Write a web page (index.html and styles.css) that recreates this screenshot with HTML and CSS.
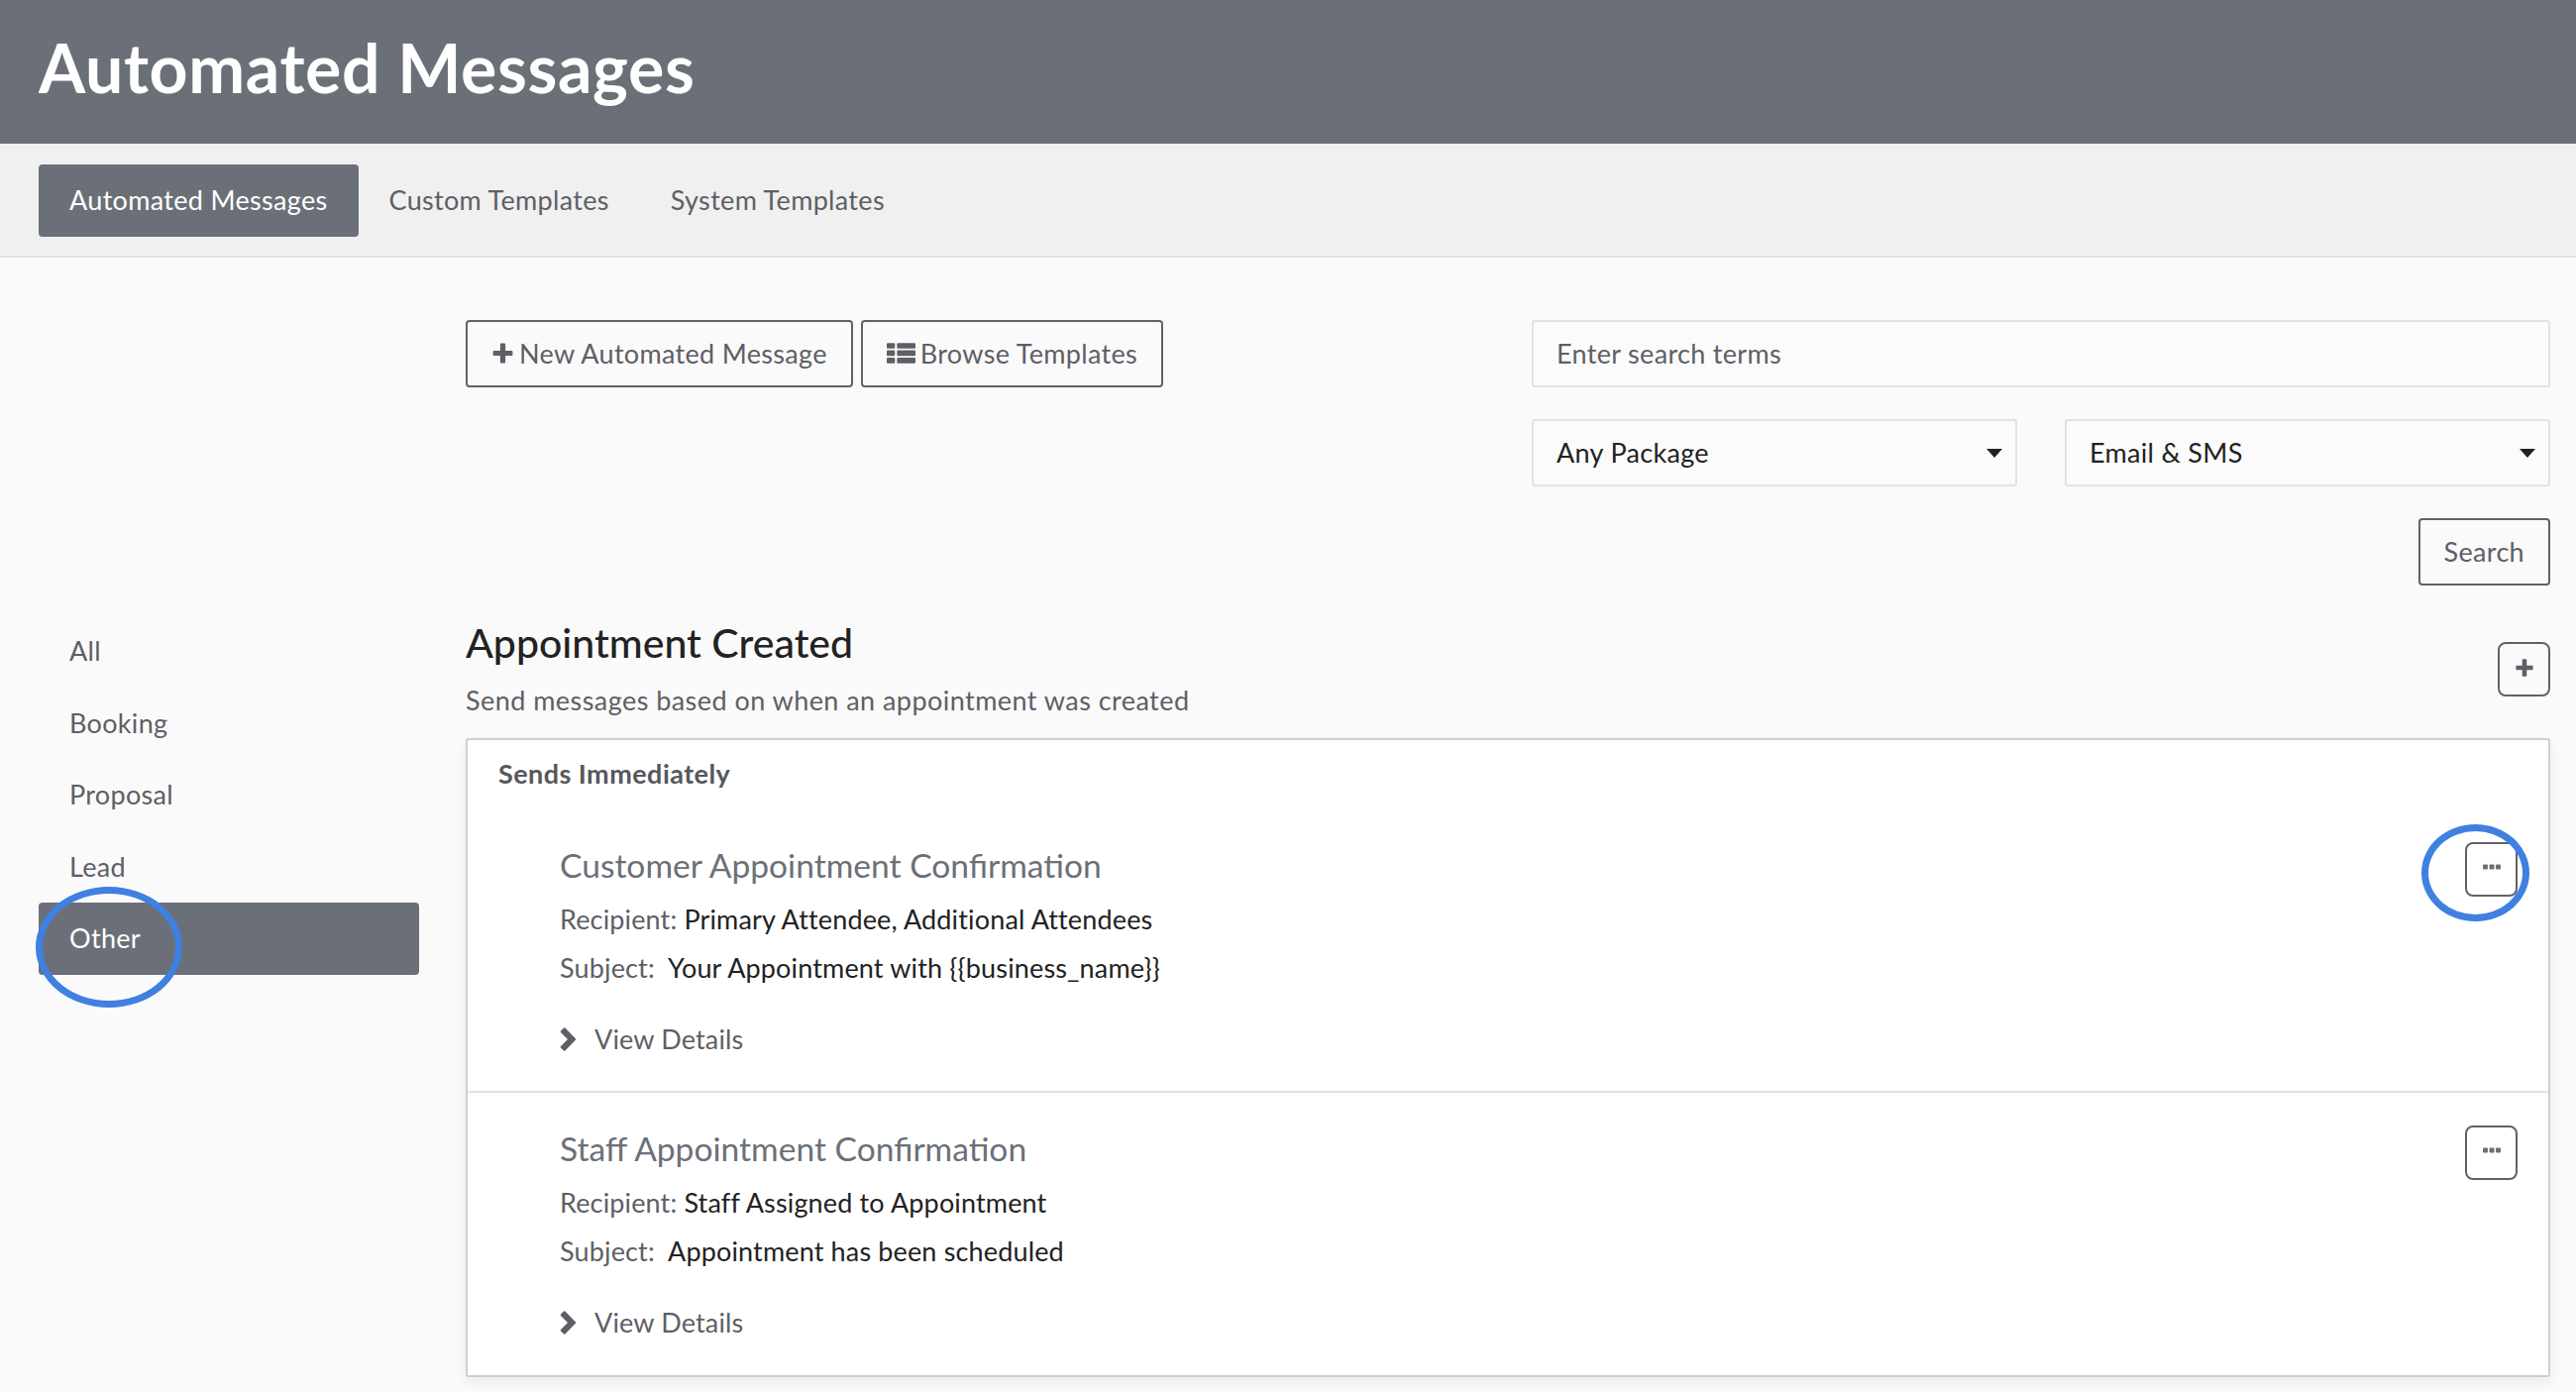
FILE: index.html
```html
<!DOCTYPE html>
<html lang="en">
<head>
<meta charset="utf-8">
<title>Automated Messages</title>
<link rel="stylesheet" href="styles.css">
</head>
<body>
<header class="hero"><h1 class="hero-title">Automated Messages</h1></header>
<nav class="subnav">
  <a class="tab tab-active">Automated Messages</a>
  <a class="tab">Custom Templates</a>
  <a class="tab">System Templates</a>
</nav>
<div class="page">
  <aside class="sidebar">
    <a class="side-item">All</a>
    <a class="side-item">Booking</a>
    <a class="side-item">Proposal</a>
    <a class="side-item">Lead</a>
    <a class="side-item side-active">Other<span class="ring ring-other"></span></a>
  </aside>
  <main class="main">
    <section class="toolbar">
      <div class="toolbar-left">
        <button class="btn">
          <svg class="btn-icon" viewBox="0 0 22 22"><path d="M8.5 2.5a1 1 0 0 1 1-1h3a1 1 0 0 1 1 1v6h6a1 1 0 0 1 1 1v3a1 1 0 0 1-1 1h-6v6a1 1 0 0 1-1 1h-3a1 1 0 0 1-1-1v-6h-6a1 1 0 0 1-1-1v-3a1 1 0 0 1 1-1h6z"/></svg>New Automated Message
        </button>
        <button class="btn">
          <svg class="btn-icon btn-icon-list" viewBox="0 0 28 22"><rect y="1" width="8" height="5.5" rx="1"/><rect x="10" y="1" width="18" height="5.5" rx="1"/><rect y="8.2" width="8" height="5.5" rx="1"/><rect x="10" y="8.2" width="18" height="5.5" rx="1"/><rect y="15.4" width="8" height="5.5" rx="1"/><rect x="10" y="15.4" width="18" height="5.5" rx="1"/></svg>Browse Templates
        </button>
      </div>
      <form class="filters">
        <input class="field" type="text" placeholder="Enter search terms">
        <div class="filter-row">
          <div class="select-wrap"><select class="field field-select"><option>Any Package</option></select></div>
          <div class="select-wrap"><select class="field field-select"><option>Email &amp; SMS</option></select></div>
        </div>
        <button class="btn btn-search" type="button">Search</button>
      </form>
    </section>
    <section class="section-head">
      <div class="section-text">
        <h2 class="section-title">Appointment Created</h2>
        <p class="section-sub">Send messages based on when an appointment was created</p>
      </div>
      <button class="square-btn square-plus" type="button">
        <svg class="plus-icon" viewBox="0 0 22 22"><path d="M8.5 2.5a1 1 0 0 1 1-1h3a1 1 0 0 1 1 1v6h6a1 1 0 0 1 1 1v3a1 1 0 0 1-1 1h-6v6a1 1 0 0 1-1 1h-3a1 1 0 0 1-1-1v-6h-6a1 1 0 0 1-1-1v-3a1 1 0 0 1 1-1h6z"/></svg>
      </button>
    </section>
    <section class="card">
      <div class="card-label">Sends Immediately</div>
      <article class="item">
        <div class="item-body">
          <h3 class="item-title">Customer Appointment Confirmation</h3>
          <p class="meta">Recipient: <span class="meta-value">Primary Attendee, Additional Attendees</span></p>
          <p class="meta meta-subject">Subject: &nbsp;<span class="meta-value">Your Appointment with {{business_name}}</span></p>
          <a class="details"><svg class="chevron" viewBox="0 0 17 24"><path d="M1 3.5 4 .6a1 1 0 0 1 1.4 0l10.5 10.7a1 1 0 0 1 0 1.4L5.4 23.4a1 1 0 0 1-1.4 0L1 20.5a1 1 0 0 1 0-1.4L8 12 1 4.900a1 1 0 0 1 0-1.400z"/></svg>View Details</a>
        </div>
        <button class="square-btn square-more" type="button">
          <svg class="more-icon" viewBox="0 0 18 6"><rect y=".5" width="5" height="5" rx="1"/><rect x="6.500" y=".5" width="5" height="5" rx="1"/><rect x="13" y=".5" width="5" height="5" rx="1"/></svg>
          <span class="ring ring-more"></span>
        </button>
      </article>
      <article class="item">
        <div class="item-body">
          <h3 class="item-title">Staff Appointment Confirmation</h3>
          <p class="meta">Recipient: <span class="meta-value">Staff Assigned to Appointment</span></p>
          <p class="meta meta-subject">Subject: &nbsp;<span class="meta-value">Appointment has been scheduled</span></p>
          <a class="details"><svg class="chevron" viewBox="0 0 17 24"><path d="M1 3.5 4 .6a1 1 0 0 1 1.4 0l10.500 10.700a1 1 0 0 1 0 1.400L5.400 23.400a1 1 0 0 1-1.400 0L1 20.500a1 1 0 0 1 0-1.400L8 12 1 4.900a1 1 0 0 1 0-1.400z"/></svg>View Details</a>
        </div>
        <button class="square-btn square-more" type="button">
          <svg class="more-icon" viewBox="0 0 18 6"><rect y=".5" width="5" height="5" rx="1"/><rect x="6.500" y=".5" width="5" height="5" rx="1"/><rect x="13" y=".5" width="5" height="5" rx="1"/></svg>
        </button>
      </article>
    </section>
  </main>
</div>
</body>
</html>
```
FILE: styles.css
```css
* { box-sizing: border-box; }
html, body { margin: 0; padding: 0; }
body {
  height: 1405px;
  overflow: hidden;
  background: #fafafa;
  color: #5d6066;
  font-family: "Lato", "Liberation Sans", sans-serif;
  font-size: 27px;
  letter-spacing: .32px;
}
button, input, select { font: inherit; letter-spacing: inherit; }

.hero {
  height: 145px;
  background: #6b7078;
  padding: 0 0 10px 39px;
  display: flex;
  align-items: center;
}
.hero-title {
  margin: 0;
  color: #fff;
  font-size: 68px;
  font-weight: 700;
  line-height: 1;
  letter-spacing: .6px;
}

.subnav {
  height: 115px;
  background: #f0f0f0;
  border-bottom: 2px solid #e3e3e3;
  padding: 21px 39px 0;
  display: flex;
  align-items: flex-start;
}
.tab {
  height: 73px;
  display: flex;
  align-items: center;
  padding: 0 31px 2px;
  color: #5d6066;
  border-radius: 4px;
}
.tab-active {
  background: #6b7078;
  color: #fff;
}

.page {
  display: flex;
  padding: 0 26px 0 39px;
}
.sidebar {
  width: 384px;
  flex: none;
  margin-right: 47px;
  padding-top: 361px;
}
.side-item {
  position: relative;
  display: flex;
  align-items: center;
  height: 72.500px;
  padding: 0 0 1px 31px;
  color: #5d6066;
  border-radius: 4px;
}
.side-active { background: #6b7078; color: #fff; }

.ring {
  position: absolute;
  border: 7px solid #3f80e0;
  border-radius: 50%;
  pointer-events: none;
}
.ring-other { left: -3px; top: -16px; width: 148px; height: 122px; }
.ring-more { left: -46px; top: -20px; width: 109px; height: 98px; }

.main { flex: 1; min-width: 0; padding-top: 63px; }
.toolbar { display: flex; justify-content: space-between; align-items: flex-start; }
.toolbar-left { display: flex; gap: 8px; }
.btn {
  height: 68px;
  padding: 0 24px 2px;
  background: transparent;
  border: 2px solid #5f6368;
  border-radius: 4px;
  color: #5d6066;
  display: inline-flex;
  align-items: center;
}
.btn-icon { width: 23px; height: 23px; fill: #5d6066; margin-right: 5px; flex: none; }
.btn-icon-list { width: 29px; }
.filters { width: 1028px; display: flex; flex-direction: column; gap: 32px; }
.field {
  width: 100%;
  height: 68px;
  padding: 0 23px 2px;
  background: #fbfbfb;
  border: 2px solid #e2e2e2;
  border-radius: 3px;
  color: #222;
  outline: none;
}
.field::placeholder { color: #5d6066; opacity: 1; }
.field-select { appearance: none; -webkit-appearance: none; }
.filter-row { display: flex; justify-content: space-between; }
.select-wrap { position: relative; width: 490px; }
.select-wrap::after {
  content: "";
  position: absolute;
  right: 15px;
  top: 30px;
  border-left: 8px solid transparent;
  border-right: 8px solid transparent;
  border-top: 9px solid #222;
}
.btn-search { align-self: flex-end; }

.section-head {
  height: 154px;
  display: flex;
  justify-content: space-between;
  align-items: flex-start;
}
.section-text { padding-top: 36px; }
.section-title {
  margin: 0 0 18px;
  color: #222;
  font-size: 41px;
  font-weight: 500;
  line-height: 44px;
  letter-spacing: 0;
}
.section-sub { margin: 0; line-height: 36px; color: #5d6066; letter-spacing: .45px; }

.square-btn {
  position: relative;
  flex: none;
  padding: 0;
  background: transparent;
  border: 2px solid #5f6368;
  border-radius: 8px;
  display: flex;
  align-items: center;
  justify-content: center;
}
.square-plus { width: 53px; height: 55px; margin-top: 57px; }
.plus-icon { width: 20px; height: 20px; fill: #5d6066; margin-top: -4px; }
.square-more { width: 53px; height: 55px; margin: 33px 31px 0 0; }
.more-icon { width: 18px; height: 6px; fill: #6b7078; margin-top: -6px; }

.card {
  width: 100%;
  height: 645px;
  background: #fff;
  border: 2px solid #cfcfcf;
  border-radius: 3px;
  box-shadow: 0 6px 14px rgba(0, 0, 0, .06);
}
.card-label {
  height: 70px;
  padding: 16px 0 0 31px;
  font-weight: 700;
  line-height: 36px;
  color: #55585d;
  letter-spacing: .45px;
}
.item {
  height: 286px;
  padding-left: 93px;
  display: flex;
  justify-content: space-between;
  align-items: flex-start;
  border-bottom: 2px solid #e2e2e2;
}
.item:last-child { border-bottom: 0; }
.item-body { padding-top: 32px; }
.item-title {
  margin: 0 0 13px;
  color: #6b7078;
  font-size: 33.600px;
  font-weight: 400;
  line-height: 48px;
  letter-spacing: 0;
}
.meta { margin: 0 0 13px; line-height: 36px; color: #5d6066; letter-spacing: .15px; }
.meta-subject { margin-bottom: 36px; }
.meta-value { color: #222; }
.details { display: flex; align-items: center; line-height: 36px; color: #5d6066; letter-spacing: .15px; }
.chevron { width: 17px; height: 24px; fill: #5d6066; margin-right: 18px; }
```
